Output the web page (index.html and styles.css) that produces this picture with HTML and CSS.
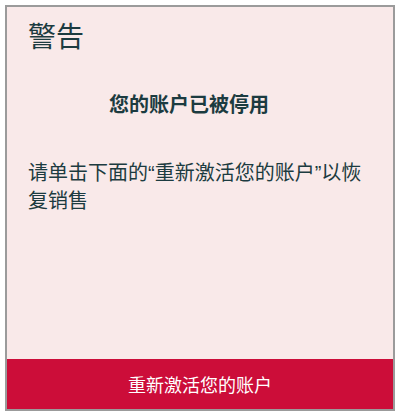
FILE: index.html
```html
<!DOCTYPE html>
<html lang="zh-CN">
<head>
<meta charset="utf-8">
<link rel="stylesheet" href="styles.css">
</head>
<body>
<div class="card">
  <div class="content">
    <h1 class="title">警告</h1>
    <p class="subtitle">您的账户已被停用</p>
    <p class="message">请单击下面的“重新激活您的账户”以恢复销售</p>
  </div>
  <button class="action">重新激活您的账户</button>
</div>
</body>
</html>
```
FILE: styles.css
```css
html, body {
  margin: 0;
  padding: 0;
  background: #ffffff;
}
body {
  padding: 5px 0 0 5px;
  font-family: "Liberation Sans", "Noto Sans CJK SC", sans-serif;
}
.card {
  box-sizing: border-box;
  width: 390px;
  height: 406px;
  border: 2px solid #9b9b9b;
  background: #f9e9e9;
  display: flex;
  flex-direction: column;
}
.content {
  flex: 1;
  padding: 14px 21px 0 21px;
  color: #1c3b40;
}
.title {
  margin: 0;
  font-size: 28px;
  font-weight: 400;
  line-height: 34px;
}
.subtitle {
  margin: 36px 0 0 0;
  padding-right: 22px;
  text-align: center;
  font-size: 20px;
  font-weight: 700;
  line-height: 28px;
}
.message {
  margin: 40px 0 0 0;
  font-size: 20px;
  line-height: 28px;
  padding-right: 5px;
}
.action {
  height: 50px;
  border: 0;
  margin: 0;
  background: #cc0d39;
  color: #ffffff;
  font-family: "Liberation Sans", "Noto Sans CJK SC", sans-serif;
  font-size: 18px;
  cursor: pointer;
}
```
